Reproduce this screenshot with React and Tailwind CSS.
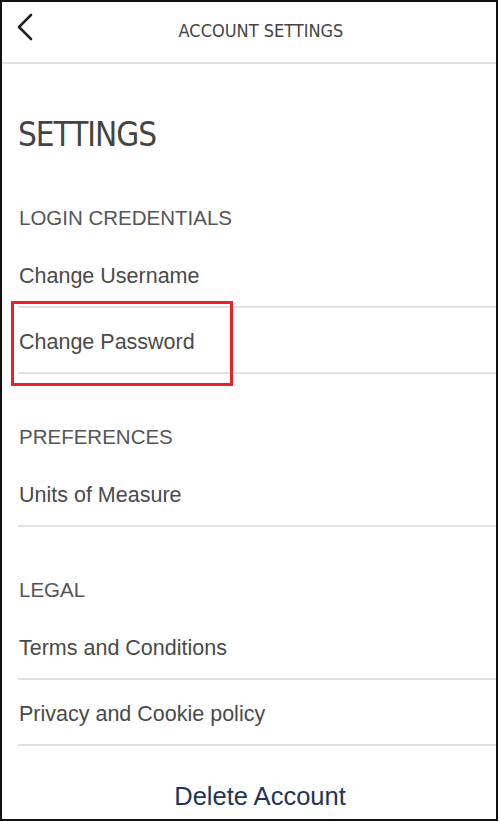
import React from 'react';

const narrow = { fontFamily: '"Liberation Sans Narrow", "DejaVu Sans Condensed", "Liberation Sans", sans-serif' };

const SectionTitle = ({ children, first }) => (
  <div className={`h-[48px] flex items-center pl-[17px] text-[20.5px] text-[#555] ${first ? '' : 'mt-[39px]'}`}>
    {children}
  </div>
);

const Row = ({ children, highlight }) => (
  <div className="relative ml-[16px] h-[66px] pt-[4px] flex items-center border-b-2 border-[#e2e2e2] text-[21.5px] text-[#4a4a4a]">
    <span className="pl-[1px]">{children}</span>
    {highlight && (
      <div className="absolute left-[-7px] top-[-7px] w-[222px] h-[85px] border-[3px] border-[#e8212b]" />
    )}
  </div>
);

export default function App() {
  return (
    <div className="w-[500px] h-[822px] bg-white" style={{ fontFamily: '"Liberation Sans", Arial, sans-serif' }}>
      <div className="w-[498px] h-[821px] border-2 border-[#111] flex flex-col overflow-hidden">
        {/* header */}
        <div className="relative h-[62px] flex items-center justify-center border-b-2 border-[#e2e2e2] shrink-0">
          <svg className="absolute left-[14px] top-[11px]" width="20" height="28" viewBox="0 0 20 28">
            <polyline points="15,2 3,14 15,26" fill="none" stroke="#222" strokeWidth="2.6" strokeLinecap="round" strokeLinejoin="round" />
          </svg>
          <span className="pl-[24px] mb-[4px] text-[18px] text-[#444]" style={narrow}>ACCOUNT SETTINGS</span>
        </div>

        <div className="h-[130px] pt-[12px] flex items-center pl-[16px] text-[33px] tracking-[-1px] text-[#444] shrink-0" style={narrow}>
          SETTINGS
        </div>

        <SectionTitle first>LOGIN CREDENTIALS</SectionTitle>
        <Row>Change Username</Row>
        <Row highlight>Change Password</Row>

        <SectionTitle>PREFERENCES</SectionTitle>
        <Row>Units of Measure</Row>

        <SectionTitle>LEGAL</SectionTitle>
        <Row>Terms and Conditions</Row>
        <Row>Privacy and Cookie policy</Row>

        <div className="pt-[28px] h-[72px] flex items-center justify-center pl-[22px] text-[25.5px] text-[#1d3557] shrink-0">
          Delete Account
        </div>
      </div>
    </div>
  );
}
